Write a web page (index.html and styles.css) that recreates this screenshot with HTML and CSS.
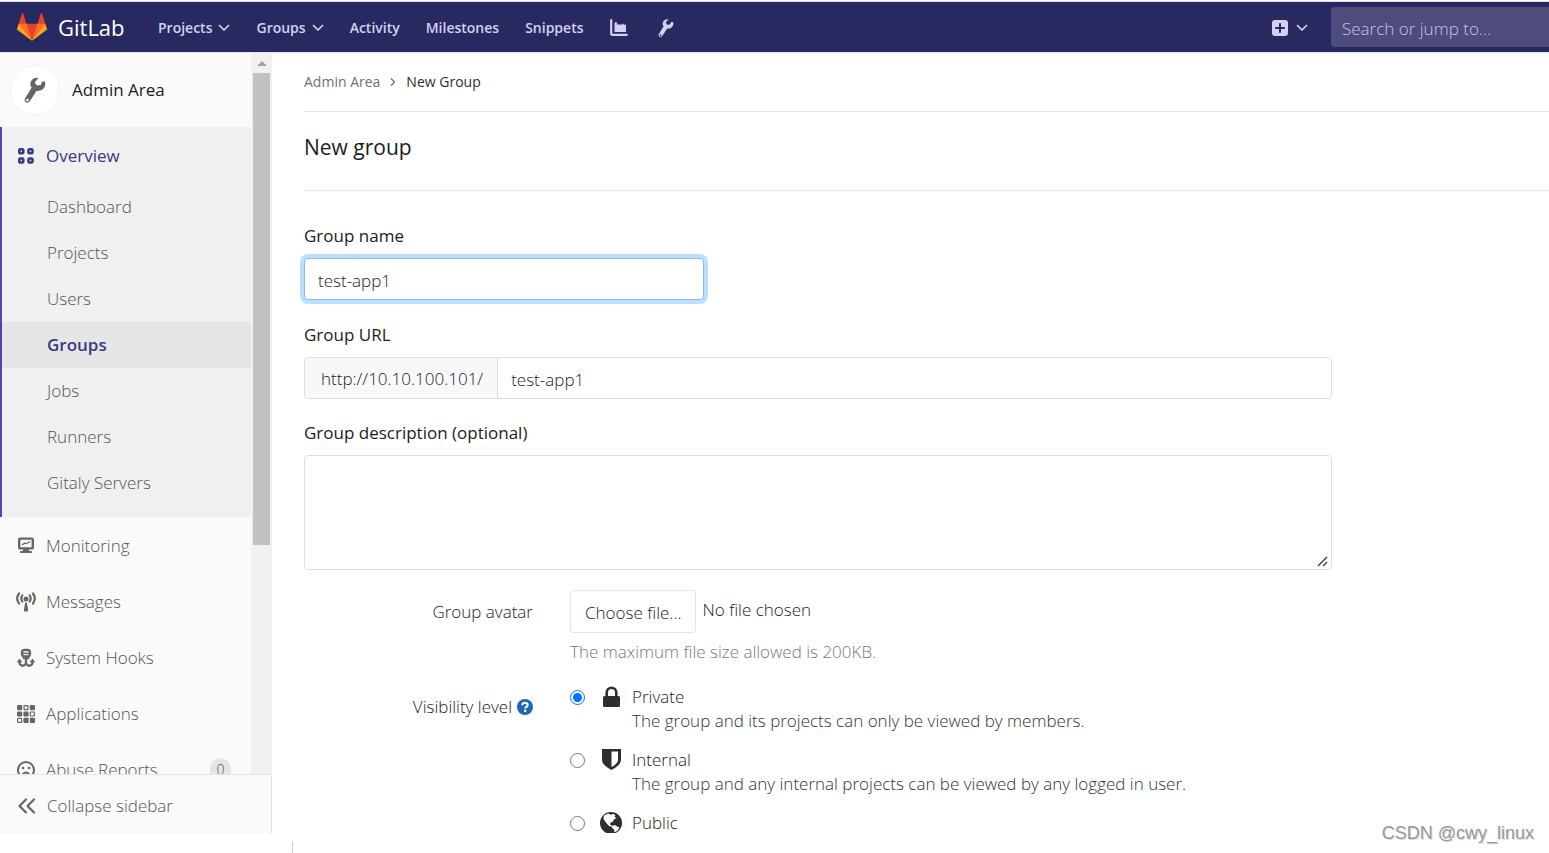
FILE: index.html
```html
<!DOCTYPE html>
<html lang="en">
<head>
<meta charset="utf-8">
<title>New Group · Admin Area · GitLab</title>
<link rel="stylesheet" href="styles.css">
</head>
<body>
<svg class="defs" aria-hidden="true">
  <symbol id="wrench" viewBox="0 0 32 32"><path fill-rule="evenodd" d="M20 2c-4.500-.7-8.300 1.800-9.200 5.400-.5 2.300.2 4.300 1.400 5.800L4.600 25.600c-.9 1.500-.4 3.500 1.100 4.400s3.500.4 4.400-1.100l7.800-12.100c3.500.9 7.300-.8 8.900-3.900 1-2 1.200-4.300.6-6.500l-3.200-.2-1.800 4.300-4.600.2-2.200-3.400z M7.400 26a1.500 1.500 0 1 1 0 3 1.500 1.500 0 0 1 0-3z"/></symbol>
  <symbol id="chevron" viewBox="0 0 12 12"><path d="M1.500 3.500 6 8l4.500-4.500" fill="none" stroke="currentColor" stroke-width="1.700" stroke-linecap="round" stroke-linejoin="round"/></symbol>
</svg>

<header class="navbar">
  <a class="brand" href="#">
    <svg class="tanuki" viewBox="0 0 36 36" aria-hidden="true">
      <path fill="#e24329" d="M2 14l9.380 9v-9l-4-12.280c-.2-.63-1.180-.63-1.380 0z"/>
      <path fill="#e24329" d="M34 14l-9.380 9v-9l4-12.280c.2-.63 1.180-.63 1.380 0z"/>
      <path fill="#e24329" d="M18 34.380 3 14h30z"/>
      <path fill="#fc6d26" d="M18 34.380 11.380 14H2l4 11z"/>
      <path fill="#fc6d26" d="M18 34.380 24.620 14H34l-4 11z"/>
      <path fill="#fca326" d="M2 14 .1 20.160c-.18.56 0 1.200.5 1.560L18 34.380z"/>
      <path fill="#fca326" d="M34 14l1.900 6.160c.18.56 0 1.200-.5 1.560L18 34.380z"/>
    </svg>
    <span class="brand-name">GitLab</span>
  </a>
  <nav class="nav-links">
    <button class="nav-item" type="button">Projects <svg class="caret"><use href="#chevron"/></svg></button>
    <button class="nav-item" type="button">Groups <svg class="caret"><use href="#chevron"/></svg></button>
    <a class="nav-item" href="#">Activity</a>
    <a class="nav-item" href="#">Milestones</a>
    <a class="nav-item" href="#">Snippets</a>
    <a class="nav-item" href="#" aria-label="Instance statistics"><svg class="icon18" viewBox="0 0 18 18"><path d="M1.200 1.200v13.600q0 1 1 1h14.600" fill="none" stroke="currentColor" stroke-width="2.200" stroke-linecap="round"/><path d="M4.500 13V4.500L6 2.500l2 3.500 1.500-1 1.500 1L13 4.500l1 1.500 2-.8V13z" fill="currentColor"/></svg></a>
    <a class="nav-item nav-icon" href="#" aria-label="Admin Area"><svg class="icon20" fill="currentColor"><use href="#wrench"/></svg></a>
  </nav>
  <div class="nav-right">
    <button class="nav-item" type="button" aria-label="New"><svg class="icon16" viewBox="0 0 16 16"><rect width="16" height="16" rx="3" fill="currentColor"/><path d="M8 4v8M4 8h8" stroke="#292961" stroke-width="2" stroke-linecap="round"/></svg><svg class="caret"><use href="#chevron"/></svg></button>
    <input class="search" type="text" placeholder="Search or jump to..." aria-label="Search or jump to">
  </div>
</header>

<div class="page">
  <aside class="sidebar">
    <div class="scroll-area">
      <div class="menu">
        <a class="context" href="#">
          <span class="avatar"><svg class="icon28" fill="#666"><use href="#wrench"/></svg></span>
          <span>Admin Area</span>
        </a>
        <section class="section-active">
          <a class="item active" href="#"><svg class="item-icon" viewBox="0 0 20 20" fill="none" stroke="currentColor" stroke-width="2.600"><rect x="3.300" y="3.300" width="4" height="4" rx="1"/><rect x="12.500" y="3.300" width="4" height="4" rx="1"/><rect x="3.300" y="12.500" width="4" height="4" rx="1"/><rect x="12.500" y="12.500" width="4" height="4" rx="1"/></svg>Overview</a>
          <a class="sub" href="#">Dashboard</a>
          <a class="sub" href="#">Projects</a>
          <a class="sub" href="#">Users</a>
          <a class="sub current" href="#">Groups</a>
          <a class="sub" href="#">Jobs</a>
          <a class="sub" href="#">Runners</a>
          <a class="sub" href="#">Gitaly Servers</a>
        </section>
        <div class="items">
          <a class="item" href="#"><svg class="item-icon" viewBox="0 0 20 20" fill="none" stroke="currentColor"><rect x="3.200" y="2.600" width="13.600" height="9.800" rx="1" stroke-width="2.400"/><path d="m6 9 2.500-1.800 2 .5L14 5.500" stroke-width="1.200"/><path d="M7.500 13h5l1 2.200h-7z" fill="currentColor" stroke="none"/><path d="M5 16h10" stroke-width="2.200" stroke-linecap="round"/></svg>Monitoring</a>
          <a class="item" href="#"><svg class="item-icon" viewBox="0 0 20 20" fill="none" stroke="currentColor" stroke-width="2.200" stroke-linecap="round"><path d="M3 1.500q-3.600 5.200 0 10M17 1.500q3.600 5.200 0 10M6.300 3.500q-2 3 0 6M13.700 3.500q2 3 0 6"/><circle cx="10" cy="7" r="2.500" fill="currentColor" stroke="none"/><path d="M9.200 10.500h1.600l1.400 8q0 1-1 1H8.800q-1 0-1-1z" fill="currentColor" stroke="none"/></svg>Messages</a>
          <a class="item" href="#"><svg class="item-icon" viewBox="0 0 20 20" fill="none" stroke="currentColor" stroke-width="2.300"><rect x="6" y="2" width="8" height="6.500" rx="2.500"/><path d="M6 5.400h8" stroke-width="1.400"/><path d="M10 9v6M6.800 10h6.400"/><path d="M3.500 13.500v1a3.200 3.200 0 0 0 6.500 0M16.500 13.500v1a3.200 3.200 0 0 1-6.500 0"/><path d="M.8 14.300 3.500 10.500l3 3.800zM19.200 14.300 16.500 10.500l-3 3.800z" fill="currentColor" stroke="none"/></svg>System Hooks</a>
          <a class="item" href="#"><svg class="item-icon" viewBox="0 0 20 20" fill="currentColor" stroke="currentColor" stroke-width="1.200"><rect x="1.600" y="1.600" width="4" height="4" rx=".5"/><rect x="8" y="1.600" width="4" height="4" rx=".5" fill="none"/><rect x="14.400" y="1.600" width="4" height="4" rx=".5"/><rect x="1.600" y="8" width="4" height="4" rx=".5"/><rect x="8" y="8" width="4" height="4" rx=".5"/><rect x="14.400" y="8" width="4" height="4" rx=".5" fill="none"/><rect x="1.600" y="14.400" width="4" height="4" rx=".5" fill="none"/><rect x="8" y="14.400" width="4" height="4" rx=".5"/><rect x="14.400" y="14.400" width="4" height="4" rx=".5"/></svg>Applications</a>
          <a class="item" href="#"><svg class="item-icon" viewBox="0 0 20 20" fill="none" stroke="currentColor" stroke-width="2"><circle cx="10" cy="10" r="8"/><path d="M6.500 14.500q3.500-4 7 0" stroke-width="1.800"/><circle cx="7" cy="8" r="1.300" fill="currentColor" stroke="none"/><circle cx="13" cy="8" r="1.300" fill="currentColor" stroke="none"/></svg>Abuse Reports<span class="badge">0</span></a>
        </div>
      </div>
      <div class="scrollbar" aria-hidden="true"><span class="arrow"></span><span class="thumb"></span></div>
    </div>
    <button class="collapse" type="button"><svg class="item-icon" viewBox="0 0 20 20" fill="none" stroke="currentColor" stroke-width="2.200" stroke-linecap="round" stroke-linejoin="round"><path d="M9 3.500 2.500 10 9 16.500M17 3.500 10.500 10l6.500 6.500"/></svg>Collapse sidebar</button>
  </aside>

  <main class="content">
    <nav class="breadcrumb" aria-label="Breadcrumb">
      <a href="#">Admin Area</a>
      <svg class="sep" viewBox="0 0 8 8" fill="none" stroke="currentColor" stroke-width="1.300"><path d="m2 .5 3.500 3.500L2 7.500"/></svg>
      <a class="here" href="#">New Group</a>
    </nav>
    <h1 class="title">New group</h1>
    <form class="form">
      <label class="label" for="name">Group name</label>
      <input class="control name" id="name" type="text" value="test-app1">
      <label class="label" for="path">Group URL</label>
      <div class="input-group">
        <span class="prefix">http://10.10.100.101/</span>
        <input class="control path" id="path" type="text" value="test-app1">
      </div>
      <label class="label" for="desc">Group description (optional)</label>
      <textarea class="control desc" id="desc"></textarea>
      <div class="row">
        <span class="row-label" id="avatar-label">Group avatar</span>
        <div>
          <div class="file"><button class="choose" type="button" aria-describedby="avatar-label">Choose file...</button><span>No file chosen</span></div>
          <p class="help">The maximum file size allowed is 200KB.</p>
        </div>
      </div>
      <div class="row visibility">
        <span class="row-label">Visibility level <svg class="icon16" viewBox="0 0 16 16"><circle cx="8" cy="8" r="8" fill="#1b69b6"/><path d="M5.300 6.200C5.300 3 10.700 3 10.700 6c0 1.800-2.500 1.800-2.500 3.500" fill="none" stroke="#fff" stroke-width="2.100"/><rect x="7" y="10.700" width="2.300" height="2.200" fill="#fff"/></svg></span>
        <div class="options">
          <div class="option">
            <input class="radio" type="radio" name="visibility" id="private" checked>
            <svg class="level" viewBox="0 0 22 22"><rect x="3" y="11" width="17" height="11" rx="1.500" fill="#2e2e2e"/><path d="M6.700 11.500V7.500a4.800 4.800 0 0 1 9.600 0v4" fill="none" stroke="#2e2e2e" stroke-width="2.600"/></svg>
            <label for="private">Private<span class="detail">The group and its projects can only be viewed by members.</span></label>
          </div>
          <div class="option">
            <input class="radio" type="radio" name="visibility" id="internal">
            <svg class="level" viewBox="0 0 22 22"><path fill="#2e2e2e" fill-rule="evenodd" d="M2 1h19v11q0 5-9.500 10Q2 17 2 12zM11.500 3.500v15.500q6.500-3.500 6.500-7V3.500z"/></svg>
            <label for="internal">Internal<span class="detail">The group and any internal projects can be viewed by any logged in user.</span></label>
          </div>
          <div class="option">
            <input class="radio" type="radio" name="visibility" id="public">
            <svg class="level" viewBox="0 0 22 22"><circle cx="11" cy="12" r="11" fill="#2e2e2e"/><path fill="#fff" d="m4 4.500 4-2 3 1.200 2-1 2.500 1.500-1 1.500 2 1.200-2.500 1.500-1.500 2.500-2 .5-.5 2 2 1-.5 1.500-3-1.500-3-3.500L3.500 8zM12 15l3-1 2 1.500 2.500 1-2 3-3 2-.5-3-2-1.500z"/></svg>
            <label for="public">Public</label>
          </div>
        </div>
      </div>
    </form>
  </main>
</div>
<footer class="strip"><span class="tick"></span></footer>
<span class="watermark">CSDN @cwy_linux</span>
</body>
</html>
```
FILE: styles.css
```css
* { box-sizing: border-box; }
body {
  margin: 0;
  height: 100vh;
  display: flex;
  flex-direction: column;
  overflow: hidden;
  background: #fff;
  color: #1c1c1c;
  font: 300 17px/24px "Open Sans", "Noto Sans", sans-serif;
}
a { color: inherit; text-decoration: none; }
button, input, textarea { font: inherit; color: inherit; margin: 0; }
button { cursor: pointer; }
svg { flex: none; display: block; }
.defs { position: absolute; width: 0; height: 0; }
.icon16 { width: 16px; height: 16px; }
.icon18 { width: 18px; height: 18px; }
.icon20 { width: 20px; height: 20px; }
.icon28 { width: 28px; height: 28px; }

/* Top bar */
.navbar {
  flex: none;
  display: flex;
  align-items: center;
  height: 52px;
  margin-top: 1px;
  padding-left: 17px;
  background: #292961;
  border-top: 1px solid #dfdfdf;
  border-bottom: 1px solid #e5e5e5;
  color: #d1d1f0;
}
.brand { display: flex; align-items: center; gap: 11px; width: 141px; color: #fff; }
.tanuki { width: 30px; height: 30px; }
.brand-name { font-size: 22px; font-weight: 400; }
.nav-links { display: flex; align-items: center; gap: 26px; }
.nav-item {
  display: flex;
  align-items: center;
  gap: 6px;
  padding: 1px 0 0;
  border: 0;
  background: none;
  font-size: 14px;
  font-weight: 600;
}
.nav-icon { margin-left: 2px; }
.caret { width: 12px; height: 12px; }
.nav-right { display: flex; align-items: center; gap: 23px; margin-left: auto; }
.nav-right .nav-item { gap: 8px; }
.search {
  width: 218px;
  height: 40px;
  padding: 2px 11px 0;
  border: 0;
  border-radius: 4px 0 0 4px;
  background: #4d4c7c;
}
.search::placeholder { color: #c4c4e6; opacity: 1; }

/* Sidebar */
.page { flex: 1; min-height: 0; display: flex; }
.sidebar { flex: none; width: 272px; display: flex; flex-direction: column; background: #fafafa; color: #555; }
.scroll-area { flex: 1; min-height: 0; display: flex; overflow: hidden; }
.menu { flex: 1; }
.context { display: flex; align-items: center; gap: 12px; height: 74px; padding-left: 10px; color: #1c1c1c; font-weight: 500; }
.avatar { display: grid; place-items: center; width: 50px; height: 50px; border: 1px solid #f2f2f2; border-radius: 50%; background: #fff; }
.section-active { padding-bottom: 11px; border-left: 2px solid #4b4ba3; background: #f0f0f0; }
.section-active .item { height: 57px; padding-left: 14px; }
.item { display: flex; align-items: center; gap: 10px; height: 56px; padding: 0 20px 0 16px; }
.item-icon { width: 20px; height: 20px; color: #666; }
.active, .active .item-icon { color: #393982; }
.active { font-weight: 500; }
.sub { display: flex; align-items: center; height: 46px; padding-left: 45px; }
.current { background: #e6e6e6; color: #393982; font-weight: 600; }
.items { padding-top: 1px; }
.badge { margin-left: auto; width: 21px; border-radius: 12px; background: #e5e5e5; font-size: 14px; text-align: center; }
.scrollbar { width: 21px; display: flex; flex-direction: column; align-items: center; background: #f1f1f1; }
.arrow { margin: 8px 0 7px; border: 5px solid transparent; border-top: 0; border-bottom-color: #a3a3a3; }
.thumb { width: 17px; height: 472px; background: #c1c1c1; }
.collapse {
  flex: none;
  display: flex;
  align-items: center;
  gap: 10px;
  height: 60px;
  padding: 2px 17px 0;
  border: 0;
  border-top: 1px solid #e5e5e5;
  border-right: 1px solid #e5e5e5;
  background: #fafafa;
  color: #555;
}

/* Main column */
.content { flex: 1; min-width: 0; overflow: hidden; padding-left: 32px; }
.breadcrumb { display: flex; align-items: center; gap: 9px; height: 59px; border-bottom: 1px solid #e5e5e5; color: #707070; font-size: 14px; font-weight: 400; }
.sep { width: 8px; height: 8px; }
.here { color: #2e2e2e; font-weight: 500; }
.title { margin: 0 0 33px; height: 79px; padding-top: 19px; border-bottom: 1px solid #e5e5e5; font-size: 21px; line-height: 32px; font-weight: 500; }
.form { max-width: 1028px; margin-right: 32px; }
.label { display: block; margin-bottom: 10px; font-weight: 500; }
.control { display: block; height: 42px; padding: 2px 13px 0; border: 1px solid #dfdfdf; border-radius: 4px; background: #fff; outline: 0; }
.name { width: 400px; max-width: 100%; margin-bottom: 23px; border-color: #80bdff; box-shadow: 0 0 0 4px #bfdeff; }
.input-group { display: flex; margin-bottom: 22px; }
.prefix { display: flex; align-items: center; padding: 1px 14px 0 16px; border: 1px solid #dfdfdf; border-right: 0; border-radius: 4px 0 0 4px; background: #f7f8fa; }
.path { flex: 1; border-radius: 0 4px 4px 0; }
.desc { width: 100%; height: 115px; resize: vertical; }
.desc::-webkit-resizer {
  background: url("data:image/svg+xml,%3Csvg xmlns='http://www.w3.org/2000/svg' width='15' height='15'%3E%3Cpath d='M2 12 11 3M7 12l4-4' stroke='%23444' stroke-width='1.500'/%3E%3C/svg%3E") no-repeat;
}
.row { display: grid; grid-template-columns: 229px 1fr; column-gap: 37px; margin-top: 20px; }
.row-label { display: flex; align-items: center; justify-content: flex-end; gap: 5px; height: 44px; white-space: nowrap; }
.file { display: flex; gap: 6px; line-height: 40px; }
.choose { height: 43px; padding: 2px 14px 0; border: 1px solid #e5e5e5; border-radius: 3px; background: #fff; }
.help { margin: 7px 0 0; color: #777; }
.visibility { margin-top: 21px; }
.option { display: flex; align-items: flex-start; min-height: 63px; }
.radio { width: 15px; height: 15px; margin: 5px 15px 0 0; }
.level { width: 22px; height: 22px; margin-right: 10px; }
.detail { display: block; color: #333; }

.strip { flex: none; height: 19px; padding: 8px 0 0 292px; }
.tick { display: block; width: 1px; height: 11px; background: #ccc; }
.watermark {
  position: absolute;
  right: 15px;
  bottom: 8px;
  color: #999;
  font: 18px/24px "Liberation Sans", Arial, sans-serif;
  text-shadow: 1px 1px 0 #ddd;
}
```
